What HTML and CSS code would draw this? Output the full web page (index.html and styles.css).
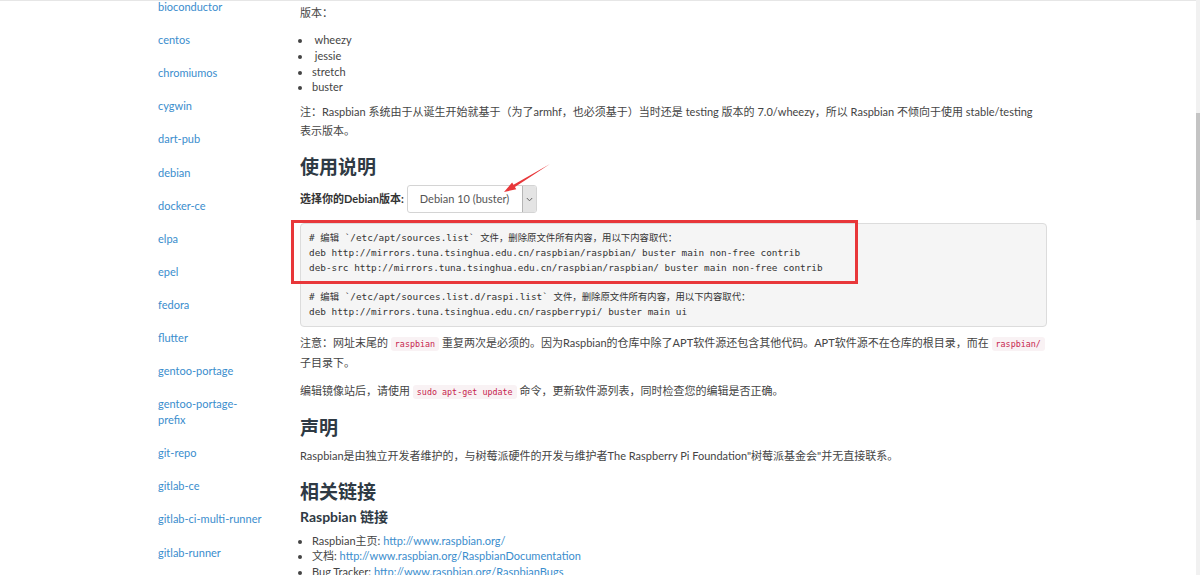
FILE: index.html
```html
<!DOCTYPE html>
<html lang="zh-CN">
<head>
    <meta charset="UTF-8" />
    <meta name="viewport" content="width=device-width, initial-scale=1" />
    <title>Raspbian 镜像使用帮助</title>
    <link rel="stylesheet" href="styles.css">
</head>
<body>

<div class="page">

    <!-- 左侧镜像列表 -->
    <div class="sidebar">
        <ul class="mirror-list">
            <li><a href="#">bioconductor</a></li>
            <li><a href="#">centos</a></li>
            <li><a href="#">chromiumos</a></li>
            <li><a href="#">cygwin</a></li>
            <li><a href="#">dart-pub</a></li>
            <li><a href="#">debian</a></li>
            <li><a href="#">docker-ce</a></li>
            <li><a href="#">elpa</a></li>
            <li><a href="#">epel</a></li>
            <li><a href="#">fedora</a></li>
            <li><a href="#">flutter</a></li>
            <li><a href="#">gentoo-portage</a></li>
            <li><a href="#">gentoo-portage-prefix</a></li>
            <li><a href="#">git-repo</a></li>
            <li><a href="#">gitlab-ce</a></li>
            <li><a href="#">gitlab-ci-multi-runner</a></li>
            <li><a href="#">gitlab-runner</a></li>
        </ul>
    </div>

    <!-- 正文 -->
    <div class="main">
        <p class="versions-title">版本：</p>
        <ul class="plain-list versions">
            <li>&nbsp;wheezy</li>
            <li>&nbsp;jessie</li>
            <li>stretch</li>
            <li>buster</li>
        </ul>
        <p class="note">注：Raspbian 系统由于从诞生开始就基于（为了armhf，也必须基于）当时还是 testing 版本的 7.0/wheezy，所以 Raspbian 不倾向于使用 stable/testing 表示版本。</p>

        <h3>使用说明</h3>

        <div class="release-row">
            <label class="release-label">选择你的Debian版本:</label>
            <div class="fake-select">
                <span class="fake-select-text">Debian 10 (buster)</span>
                <span class="fake-select-btn">
                    <svg width="7" height="5" viewBox="0 0 7 5"><path d="M0.8 1 L3.5 3.8 L6.2 1" fill="none" stroke="#666" stroke-width="1"/></svg>
                </span>
            </div>
            <!-- 标注箭头 -->
            <svg class="mark-arrow" width="56" height="36" viewBox="0 0 56 36">
                <polygon points="50,4 14.9,26.9 16.3,29.2 4,32 12.1,22.4 13.5,24.7" fill="#e8373a"/>
            </svg>
        </div>

        <div class="code-wrap">
<pre class="code"># 编辑 `/etc/apt/sources.list` 文件，删除原文件所有内容，用以下内容取代：
deb http://mirrors.tuna.tsinghua.edu.cn/raspbian/raspbian/ buster main non-free contrib
deb-src http://mirrors.tuna.tsinghua.edu.cn/raspbian/raspbian/ buster main non-free contrib

# 编辑 `/etc/apt/sources.list.d/raspi.list` 文件，删除原文件所有内容，用以下内容取代：
deb http://mirrors.tuna.tsinghua.edu.cn/raspberrypi/ buster main ui</pre>
            <div class="mark-box"></div>
        </div>

        <p>注意：网址末尾的 <code>raspbian</code> 重复两次是必须的。因为Raspbian的仓库中除了APT软件源还包含其他代码。APT软件源不在仓库的根目录，而在 <code>raspbian/</code> 子目录下。</p>
        <p>编辑镜像站后，请使用 <code>sudo apt-get update</code> 命令，更新软件源列表，同时检查您的编辑是否正确。</p>

        <h3>声明</h3>
        <p>Raspbian是由独立开发者维护的，与树莓派硬件的开发与维护者The Raspberry Pi Foundation"树莓派基金会"并无直接联系。</p>

        <h3 class="tight">相关链接</h3>
        <h4>Raspbian 链接</h4>
        <ul class="plain-list links">
            <li>Raspbian主页: <a href="#">http://www.raspbian.org/</a></li>
            <li>文档: <a href="#">http://www.raspbian.org/RaspbianDocumentation</a></li>
            <li>Bug Tracker: <a href="#">http://www.raspbian.org/RaspbianBugs</a></li>
        </ul>
    </div>
</div>

<!-- 滚动条 -->
<div class="scroll-track"><div class="scroll-thumb"></div></div>

</body>
</html>
```

FILE: styles.css
```css
* {
    box-sizing: border-box;
}
html, body {
    height: 100%;
}
body {
    margin: 0;
    overflow: hidden;
    background: #fff;
    font-family: Lato, "Noto Sans CJK SC", sans-serif;
    font-size: 11px;
    line-height: 18.57px;
    color: #444;
    border-top: 1px solid #e6e6e6;
}
a {
    color: #3a8dcd;
    text-decoration: none;
}
.page {
    display: flex;
    padding-left: 158px;
}

/* sidebar */
.sidebar {
    width: 142px;
    flex-shrink: 0;
}
.mirror-list {
    list-style: none;
    margin: -10.5px 0 0;
    padding: 0;
    width: 105px;
}
.mirror-list li {
    padding: 8.55px 0;
    line-height: 16px;
}

/* main column */
.main {
    width: 747px;
    position: relative;
}
p {
    margin: 0 0 10px;
}
.versions-title {
    margin: 2.7px 0 10px;
}
.note {
    width: 742px;
}
.plain-list {
    margin: 0 0 8px;
    padding-left: 12px;
}
.plain-list li {
    line-height: 15.7px;
}
h3 {
    font-size: 19px;
    line-height: 24px;
    font-weight: 700;
    color: #2f3a44;
    margin: 14.5px 0 6.5px;
}
h3.tight {
    margin-bottom: 3px;
}
h4 {
    font-size: 14px;
    line-height: 20px;
    font-weight: 700;
    color: #2f3a44;
    margin: 0 0 6px;
}

/* release select */
.release-row {
    display: flex;
    align-items: center;
    height: 28px;
    position: relative;
}
.release-label {
    font-weight: 700;
    color: #333;
    margin-right: 3px;
}
.fake-select {
    display: flex;
    width: 130px;
    height: 28px;
    border: 1px solid #d4d4d4;
    border-radius: 3px;
    background: #fff;
}
.fake-select-text {
    flex: 1;
    padding-left: 12px;
    line-height: 26px;
    color: #555;
    white-space: nowrap;
}
.fake-select-btn {
    width: 14px;
    display: flex;
    align-items: center;
    justify-content: center;
    background: #e4e4e4;
    border-left: 1px solid #b5b5b5;
    border-radius: 0 2px 2px 0;
}
.mark-arrow {
    position: absolute;
    left: 200px;
    top: -25px;
}

/* code */
.code-wrap {
    position: relative;
    margin-top: 10px;
}
.code {
    margin: 0 0 7px;
    padding: 7px 8px 6px;
    background: #f5f5f5;
    border: 1px solid #dcdcdc;
    border-radius: 4px;
    font-family: "DejaVu Sans Mono", "Noto Sans CJK SC", monospace;
    font-size: 9.4px;
    line-height: 14.8px;
    color: #333;
    white-space: pre;
}
.mark-box {
    position: absolute;
    left: -9px;
    top: -3px;
    width: 567px;
    height: 64px;
    border: 3px solid #e8373a;
}
code {
    font-family: "DejaVu Sans Mono", monospace;
    font-size: 8.4px;
    padding: 2px 4px;
    color: #c7254e;
    background: #f9f2f4;
    border-radius: 3px;
}

/* fake scrollbar */
.scroll-track {
    position: fixed;
    top: 0;
    right: 0;
    width: 4px;
    height: 100%;
    background: #f1f1f1;
}
.scroll-thumb {
    margin-top: 113px;
    height: 107px;
    background: #c4c4c4;
}
```
